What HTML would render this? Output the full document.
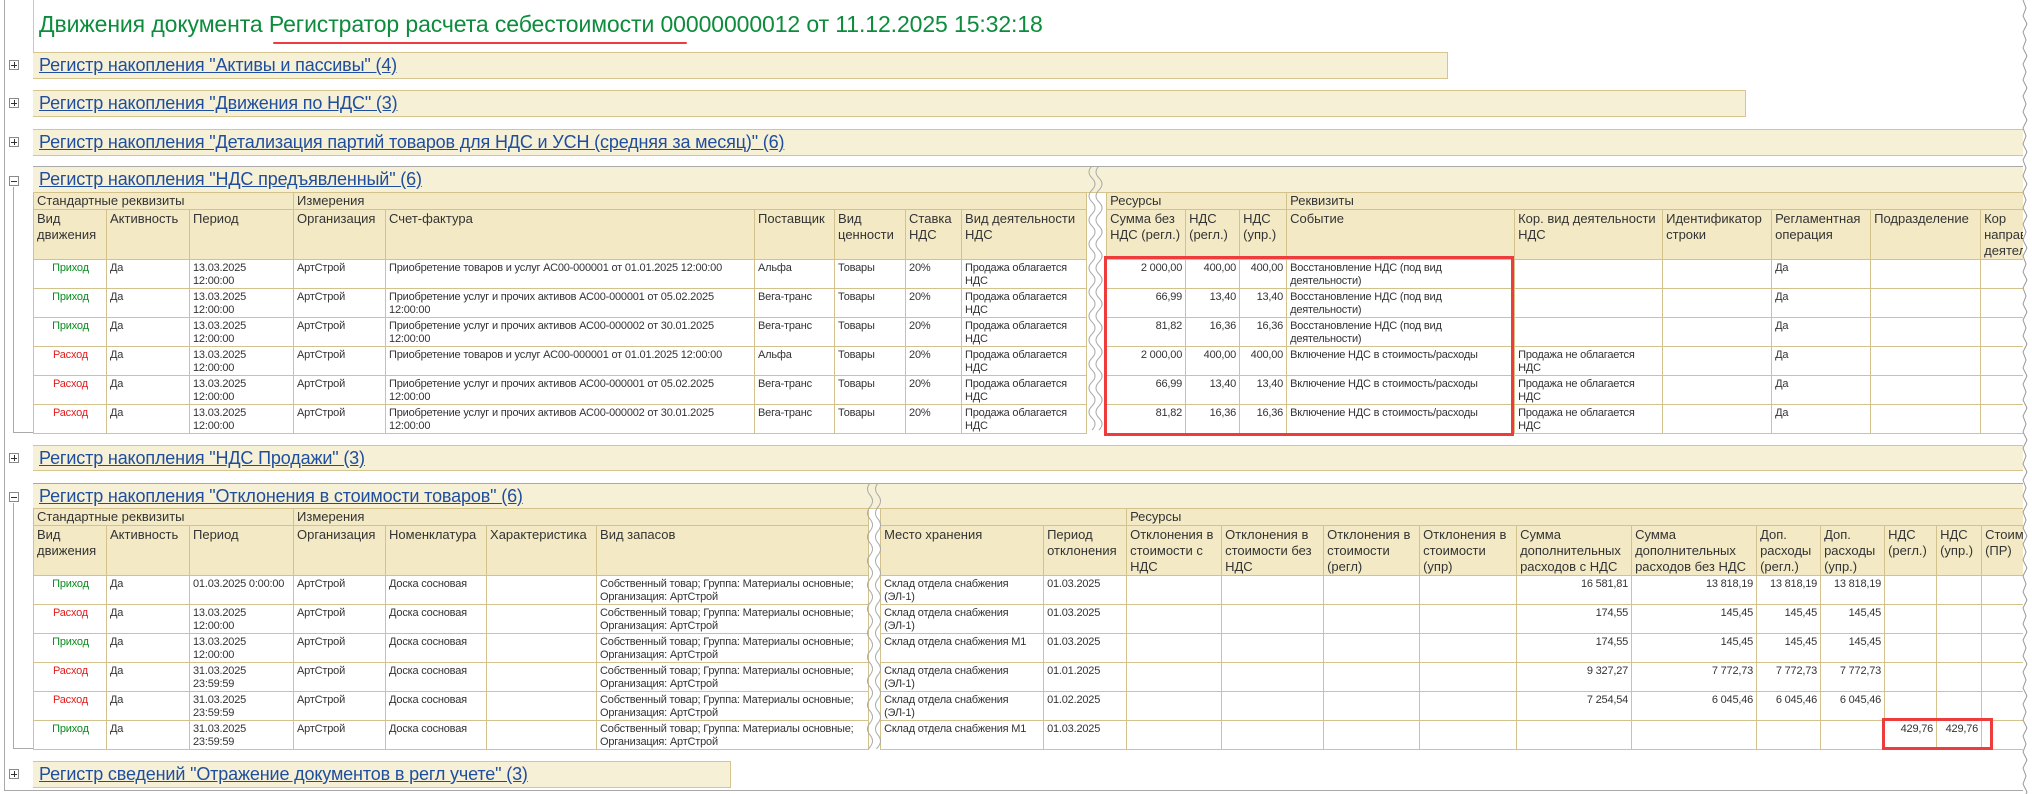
<!DOCTYPE html>
<html><head><meta charset="utf-8">
<style>
*{margin:0;padding:0;box-sizing:border-box}
body{width:2032px;height:794px;background:#fff;position:relative;overflow:hidden;font-family:"Liberation Sans",Arial,sans-serif;color:#333}
.a{position:absolute}
.title{left:39px;top:11px;font-size:23px;color:#0c8c3c;white-space:nowrap;letter-spacing:-0.1px}
.bar{position:absolute;left:33px;height:27px;background:#f6f0d6;border-top:1px solid #d6c58e;border-bottom:1px solid #d6c58e;border-right:1px solid #d6c58e}
.bar a{position:absolute;left:6px;top:2px;font-size:18px;color:#1f4e9e;text-decoration:underline;white-space:nowrap;letter-spacing:-0.15px}
.ic{position:absolute;left:9px;width:10px;height:10px;border:1px solid #8a8a8a;background:#fff}
.ic:before{content:"";position:absolute;left:1px;top:3.5px;width:6px;height:1px;background:#333}
.ic.p:after{content:"";position:absolute;left:3.5px;top:1px;width:1px;height:6px;background:#333}
.gl{position:absolute;background:#a9a9a9}
table{position:absolute;left:33px;border-collapse:collapse;table-layout:fixed}
td{border:1px solid #d3c28c;vertical-align:top;overflow:hidden}
tr.g{height:17px}
tr.g td{background:#f3eac5;font-size:13px;line-height:15px;padding:0 3px;white-space:nowrap}
tr.h{height:49px}
tr.h td{background:#f3eac5;font-size:13px;line-height:16px;padding:1px 3px 0}
tr.d{height:29px}
tr.d td{background:#fff;font-size:11px;line-height:13px;padding:2px 2px 0 3px;letter-spacing:-0.2px}
td.w{border-top:none;border-bottom:none;background:#fff!important}
.in{color:#0a8a1e;text-align:center}
.out{color:#e21b1b;text-align:center}
.r{text-align:right;padding-right:3px!important}
</style></head><body>

<div class="gl" style="left:4px;top:0;width:1px;height:791px"></div>
<div class="gl" style="left:33px;top:0;width:1px;height:52px;background:#c8c8c8"></div>
<div class="gl" style="left:4px;top:790px;width:2020px;height:1px"></div>

<div class="a title">Движения документа Регистратор расчета себестоимости 00000000012 от 11.12.2025 15:32:18</div>
<div class="a" style="left:273px;top:42px;width:414px;height:2px;background:#ee3b3b;border-radius:1px"></div>

<div class="bar" style="top:52px;width:1415px"><a>Регистр накопления "Активы и пассивы" (4)</a></div>
<div class="ic p" style="top:60px"></div>
<div class="bar" style="top:90px;width:1713px"><a>Регистр накопления "Движения по НДС" (3)</a></div>
<div class="ic p" style="top:98px"></div>
<div class="bar" style="top:129px;width:1990px;border-right:none"><a>Регистр накопления "Детализация партий товаров для НДС и УСН (средняя за месяц)" (6)</a></div>
<div class="ic p" style="top:137px"></div>

<div class="gl" style="left:33px;top:166px;width:1990px;height:1px"></div>
<div class="bar" style="top:167px;width:1990px;height:26px;border-right:none;border-top:none"><a>Регистр накопления "НДС предъявленный" (6)</a></div>
<div class="ic" style="top:176px"></div>
<div class="gl" style="left:13px;top:187px;width:1px;height:246px"></div>
<div class="gl" style="left:13px;top:432px;width:2010px;height:1px"></div>

<table style="top:192px;width:1990px">
<colgroup><col style="width:73px"><col style="width:83px"><col style="width:104px"><col style="width:92px"><col style="width:369px"><col style="width:80px"><col style="width:71px"><col style="width:56px"><col style="width:125px"><col style="width:20px"><col style="width:79px"><col style="width:54px"><col style="width:47px"><col style="width:228px"><col style="width:148px"><col style="width:109px"><col style="width:99px"><col style="width:110px"><col style="width:43px"></colgroup>
<tr class="g"><td colspan="3">Стандартные реквизиты</td><td colspan="6">Измерения</td><td class="w"></td><td colspan="3">Ресурсы</td><td colspan="6">Реквизиты</td></tr>
<tr class="h"><td>Вид движения</td><td>Активность</td><td>Период</td><td>Организация</td><td>Счет-фактура</td><td>Поставщик</td><td>Вид ценности</td><td>Ставка НДС</td><td>Вид деятельности НДС</td><td class="w"></td><td>Сумма без НДС (регл.)</td><td>НДС (регл.)</td><td>НДС (упр.)</td><td>Событие</td><td>Кор. вид деятельности НДС</td><td>Идентификатор строки</td><td>Регламентная операция</td><td>Подразделение</td><td>Кор направ деятел</td></tr>
<tr class="d"><td class="in">Приход</td><td>Да</td><td>13.03.2025<br>12:00:00</td><td>АртСтрой</td><td>Приобретение товаров и услуг АС00-000001 от 01.01.2025 12:00:00</td><td>Альфа</td><td>Товары</td><td>20%</td><td>Продажа облагается<br>НДС</td><td class="w"></td><td class="r">2 000,00</td><td class="r">400,00</td><td class="r">400,00</td><td>Восстановление НДС (под вид<br>деятельности)</td><td></td><td></td><td>Да</td><td></td><td></td></tr>
<tr class="d"><td class="in">Приход</td><td>Да</td><td>13.03.2025<br>12:00:00</td><td>АртСтрой</td><td>Приобретение услуг и прочих активов АС00-000001 от 05.02.2025<br>12:00:00</td><td>Вега-транс</td><td>Товары</td><td>20%</td><td>Продажа облагается<br>НДС</td><td class="w"></td><td class="r">66,99</td><td class="r">13,40</td><td class="r">13,40</td><td>Восстановление НДС (под вид<br>деятельности)</td><td></td><td></td><td>Да</td><td></td><td></td></tr>
<tr class="d"><td class="in">Приход</td><td>Да</td><td>13.03.2025<br>12:00:00</td><td>АртСтрой</td><td>Приобретение услуг и прочих активов АС00-000002 от 30.01.2025<br>12:00:00</td><td>Вега-транс</td><td>Товары</td><td>20%</td><td>Продажа облагается<br>НДС</td><td class="w"></td><td class="r">81,82</td><td class="r">16,36</td><td class="r">16,36</td><td>Восстановление НДС (под вид<br>деятельности)</td><td></td><td></td><td>Да</td><td></td><td></td></tr>
<tr class="d"><td class="out">Расход</td><td>Да</td><td>13.03.2025<br>12:00:00</td><td>АртСтрой</td><td>Приобретение товаров и услуг АС00-000001 от 01.01.2025 12:00:00</td><td>Альфа</td><td>Товары</td><td>20%</td><td>Продажа облагается<br>НДС</td><td class="w"></td><td class="r">2 000,00</td><td class="r">400,00</td><td class="r">400,00</td><td>Включение НДС в стоимость/расходы</td><td>Продажа не облагается<br>НДС</td><td></td><td>Да</td><td></td><td></td></tr>
<tr class="d"><td class="out">Расход</td><td>Да</td><td>13.03.2025<br>12:00:00</td><td>АртСтрой</td><td>Приобретение услуг и прочих активов АС00-000001 от 05.02.2025<br>12:00:00</td><td>Вега-транс</td><td>Товары</td><td>20%</td><td>Продажа облагается<br>НДС</td><td class="w"></td><td class="r">66,99</td><td class="r">13,40</td><td class="r">13,40</td><td>Включение НДС в стоимость/расходы</td><td>Продажа не облагается<br>НДС</td><td></td><td>Да</td><td></td><td></td></tr>
<tr class="d"><td class="out">Расход</td><td>Да</td><td>13.03.2025<br>12:00:00</td><td>АртСтрой</td><td>Приобретение услуг и прочих активов АС00-000002 от 30.01.2025<br>12:00:00</td><td>Вега-транс</td><td>Товары</td><td>20%</td><td>Продажа облагается<br>НДС</td><td class="w"></td><td class="r">81,82</td><td class="r">16,36</td><td class="r">16,36</td><td>Включение НДС в стоимость/расходы</td><td>Продажа не облагается<br>НДС</td><td></td><td>Да</td><td></td><td></td></tr>
</table>
<svg class="a" style="left:1084px;top:166px" width="24" height="268"><path d="M8 0 q-6 6 0 12 q6 6 0 12 q-6 6 0 12 q6 6 0 12 q-6 6 0 12 q6 6 0 12 q-6 6 0 12 q6 6 0 12 q-6 6 0 12 q6 6 0 12 q-6 6 0 12 q6 6 0 12 q-6 6 0 12 q6 6 0 12 q-6 6 0 12 q6 6 0 12 q-6 6 0 12 q6 6 0 12 q-6 6 0 12 q6 6 0 12 q-6 6 0 12 q6 6 0 12" fill="none" stroke="#aaa"/><path d="M15 0 q-6 6 0 12 q6 6 0 12 q-6 6 0 12 q6 6 0 12 q-6 6 0 12 q6 6 0 12 q-6 6 0 12 q6 6 0 12 q-6 6 0 12 q6 6 0 12 q-6 6 0 12 q6 6 0 12 q-6 6 0 12 q6 6 0 12 q-6 6 0 12 q6 6 0 12 q-6 6 0 12 q6 6 0 12 q-6 6 0 12 q6 6 0 12 q-6 6 0 12 q6 6 0 12" fill="none" stroke="#aaa"/></svg>
<div class="a" style="left:1104px;top:256px;width:410px;height:180px;border:3px solid #ee3b3b"></div>

<div class="bar" style="top:445px;width:1990px;height:26px;border-right:none"><a>Регистр накопления "НДС Продажи" (3)</a></div>
<div class="ic p" style="top:453px"></div>

<div class="gl" style="left:33px;top:483px;width:1990px;height:1px"></div>
<div class="bar" style="top:484px;width:1990px;height:25px;border-right:none;border-top:none"><a>Регистр накопления "Отклонения в стоимости товаров" (6)</a></div>
<div class="ic" style="top:492px"></div>
<div class="gl" style="left:13px;top:503px;width:1px;height:246px"></div>
<div class="gl" style="left:13px;top:748px;width:2010px;height:1px"></div>

<table style="top:508px;width:1990px">
<colgroup><col style="width:73px"><col style="width:83px"><col style="width:104px"><col style="width:92px"><col style="width:101px"><col style="width:110px"><col style="width:272px"><col style="width:12px"><col style="width:163px"><col style="width:83px"><col style="width:95px"><col style="width:102px"><col style="width:96px"><col style="width:97px"><col style="width:115px"><col style="width:125px"><col style="width:64px"><col style="width:64px"><col style="width:52px"><col style="width:45px"><col style="width:42px"></colgroup>
<tr class="g"><td colspan="3">Стандартные реквизиты</td><td colspan="4">Измерения</td><td class="w"></td><td colspan="2"></td><td colspan="11">Ресурсы</td></tr>
<tr class="h"><td>Вид движения</td><td>Активность</td><td>Период</td><td>Организация</td><td>Номенклатура</td><td>Характеристика</td><td>Вид запасов</td><td class="w"></td><td>Место хранения</td><td>Период отклонения</td><td>Отклонения в стоимости с НДС</td><td>Отклонения в стоимости без НДС</td><td>Отклонения в стоимости (регл)</td><td>Отклонения в стоимости (упр)</td><td>Сумма дополнительных расходов с НДС</td><td>Сумма дополнительных расходов без НДС</td><td>Доп. расходы (регл.)</td><td>Доп. расходы (упр.)</td><td>НДС (регл.)</td><td>НДС (упр.)</td><td>Стоим (ПР)</td></tr>
<tr class="d"><td class="in">Приход</td><td>Да</td><td>01.03.2025 0:00:00</td><td>АртСтрой</td><td>Доска сосновая</td><td></td><td>Собственный товар; Группа: Материалы основные;<br>Организация: АртСтрой</td><td class="w"></td><td>Склад отдела снабжения<br>(ЭЛ-1)</td><td>01.03.2025</td><td></td><td></td><td></td><td></td><td class="r">16 581,81</td><td class="r">13 818,19</td><td class="r">13 818,19</td><td class="r">13 818,19</td><td></td><td></td><td></td></tr>
<tr class="d"><td class="out">Расход</td><td>Да</td><td>13.03.2025<br>12:00:00</td><td>АртСтрой</td><td>Доска сосновая</td><td></td><td>Собственный товар; Группа: Материалы основные;<br>Организация: АртСтрой</td><td class="w"></td><td>Склад отдела снабжения<br>(ЭЛ-1)</td><td>01.03.2025</td><td></td><td></td><td></td><td></td><td class="r">174,55</td><td class="r">145,45</td><td class="r">145,45</td><td class="r">145,45</td><td></td><td></td><td></td></tr>
<tr class="d"><td class="in">Приход</td><td>Да</td><td>13.03.2025<br>12:00:00</td><td>АртСтрой</td><td>Доска сосновая</td><td></td><td>Собственный товар; Группа: Материалы основные;<br>Организация: АртСтрой</td><td class="w"></td><td>Склад отдела снабжения М1</td><td>01.03.2025</td><td></td><td></td><td></td><td></td><td class="r">174,55</td><td class="r">145,45</td><td class="r">145,45</td><td class="r">145,45</td><td></td><td></td><td></td></tr>
<tr class="d"><td class="out">Расход</td><td>Да</td><td>31.03.2025<br>23:59:59</td><td>АртСтрой</td><td>Доска сосновая</td><td></td><td>Собственный товар; Группа: Материалы основные;<br>Организация: АртСтрой</td><td class="w"></td><td>Склад отдела снабжения<br>(ЭЛ-1)</td><td>01.01.2025</td><td></td><td></td><td></td><td></td><td class="r">9 327,27</td><td class="r">7 772,73</td><td class="r">7 772,73</td><td class="r">7 772,73</td><td></td><td></td><td></td></tr>
<tr class="d"><td class="out">Расход</td><td>Да</td><td>31.03.2025<br>23:59:59</td><td>АртСтрой</td><td>Доска сосновая</td><td></td><td>Собственный товар; Группа: Материалы основные;<br>Организация: АртСтрой</td><td class="w"></td><td>Склад отдела снабжения<br>(ЭЛ-1)</td><td>01.02.2025</td><td></td><td></td><td></td><td></td><td class="r">7 254,54</td><td class="r">6 045,46</td><td class="r">6 045,46</td><td class="r">6 045,46</td><td></td><td></td><td></td></tr>
<tr class="d"><td class="in">Приход</td><td>Да</td><td>31.03.2025<br>23:59:59</td><td>АртСтрой</td><td>Доска сосновая</td><td></td><td>Собственный товар; Группа: Материалы основные;<br>Организация: АртСтрой</td><td class="w"></td><td>Склад отдела снабжения М1</td><td>01.03.2025</td><td></td><td></td><td></td><td></td><td></td><td></td><td></td><td></td><td class="r">429,76</td><td class="r">429,76</td><td></td></tr>
</table>
<svg class="a" style="left:864px;top:483px" width="20" height="266"><path d="M6 0 q-5 6 0 12 q5 6 0 12 q-5 6 0 12 q5 6 0 12 q-5 6 0 12 q5 6 0 12 q-5 6 0 12 q5 6 0 12 q-5 6 0 12 q5 6 0 12 q-5 6 0 12 q5 6 0 12 q-5 6 0 12 q5 6 0 12 q-5 6 0 12 q5 6 0 12 q-5 6 0 12 q5 6 0 12 q-5 6 0 12 q5 6 0 12 q-5 6 0 12 q5 6 0 12 q-5 6 0 12" fill="none" stroke="#aaa"/><path d="M14 0 q-5 6 0 12 q5 6 0 12 q-5 6 0 12 q5 6 0 12 q-5 6 0 12 q5 6 0 12 q-5 6 0 12 q5 6 0 12 q-5 6 0 12 q5 6 0 12 q-5 6 0 12 q5 6 0 12 q-5 6 0 12 q5 6 0 12 q-5 6 0 12 q5 6 0 12 q-5 6 0 12 q5 6 0 12 q-5 6 0 12 q5 6 0 12 q-5 6 0 12 q5 6 0 12 q-5 6 0 12" fill="none" stroke="#aaa"/></svg>
<div class="a" style="left:1882px;top:718px;width:111px;height:32px;border:3px solid #ee3b3b"></div>

<div class="bar" style="top:761px;width:698px;height:27px"><a>Регистр сведений "Отражение документов в регл учете" (3)</a></div>
<div class="ic p" style="top:769px"></div>

<div class="a" style="left:2023px;top:0;width:9px;height:794px;background:#fff"></div>
<svg class="a" style="left:2016px;top:0" width="16" height="794"><path d="M7 0 l3 8 l-3 8 l4 8 l-4 8 l3 8 l-3 8 l4 8 l-4 8 l3 8 l-3 8 l4 8 l-4 8 l3 8 l-3 8 l4 8 l-4 8 l3 8 l-3 8 l4 8 l-4 8 l3 8 l-3 8 l4 8 l-4 8 l3 8 l-3 8 l4 8 l-4 8 l3 8 l-3 8 l4 8 l-4 8 l3 8 l-3 8 l4 8 l-4 8 l3 8 l-3 8 l4 8 l-4 8 l3 8 l-3 8 l4 8 l-4 8 l3 8 l-3 8 l4 8 l-4 8 l3 8 l-3 8 l4 8 l-4 8 l3 8 l-3 8 l4 8 l-4 8 l3 8 l-3 8 l4 8 l-4 8 l3 8 l-3 8 l4 8 l-4 8 l3 8 l-3 8 l4 8 l-4 8 l3 8 l-3 8 l4 8 l-4 8 l3 8 l-3 8 l4 8 l-4 8 l3 8 l-3 8 l4 8 l-4 8 l3 8 l-3 8 l4 8 l-4 8 l3 8 l-3 8 l4 8 l-4 8 l3 8 l-3 8 l4 8 l-4 8 l3 8 l-3 8 l4 8 l-4 8 l3 8 l-3 8 l4 8 l-4 8 l3 8 l-3 8 l4 8 l-4 8" fill="none" stroke="#999"/></svg>
</body></html>
